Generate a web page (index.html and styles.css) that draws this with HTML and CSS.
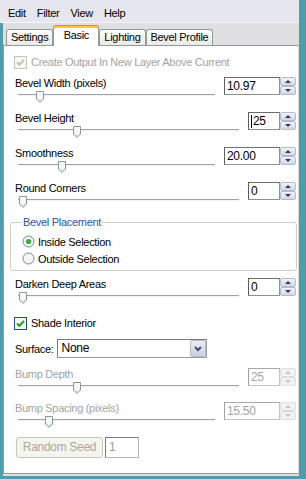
FILE: index.html
```html
<!DOCTYPE html>
<html lang="en">
<head>
    <meta charset="UTF-8">
    <title>Bevel</title>
    <link rel="stylesheet" href="styles.css">
</head>
<body>

<div class="window">
    <div class="menubar">
        <span class="menu">Edit</span>
        <span class="menu">Filter</span>
        <span class="menu">View</span>
        <span class="menu">Help</span>
    </div>

    <div class="dialog">
        <div class="tabs">
            <div class="tab">Settings</div>
            <div class="tab active">Basic</div>
            <div class="tab">Lighting</div>
            <div class="tab">Bevel Profile</div>
        </div>

        <div class="panel">
            <div class="check-row disabled">
                <svg class="box" width="13" height="13" viewBox="0 0 13 13"><rect x="0.5" y="0.5" width="12" height="12" fill="#f7f7f3" stroke="#c6c5b8"/><path d="M3 6.5L5.3 8.8L10 4" fill="none" stroke="#c6c5b8" stroke-width="2"/></svg>
                <span>Create Output In New Layer Above Current</span>
            </div>

            <div class="row">
                <div class="slide">
                    <div class="label">Bevel Width (pixels)</div>
                    <div class="track"><svg class="thumb" style="left:18px" width="8" height="12" viewBox="0 0 8 12"><path d="M0.5 0.5H7.5V8L4 11.5L0.5 8Z" fill="#f6f6f2" stroke="#8a98a6"/><path d="M1.6 8.3L4 10.3L6.4 8.3" fill="none" stroke="#a9d3a9"/></svg></div>
                </div>
                <div class="spin">
                    <div class="field wide">10.97</div>
                    <div class="arrows"><span class="btn"><i class="up"></i></span><span class="btn"><i class="down"></i></span></div>
                </div>
            </div>

            <div class="row">
                <div class="slide">
                    <div class="label">Bevel Height</div>
                    <div class="track"><svg class="thumb" style="left:55px" width="8" height="12" viewBox="0 0 8 12"><path d="M0.5 0.5H7.5V8L4 11.5L0.5 8Z" fill="#f6f6f2" stroke="#8a98a6"/><path d="M1.6 8.3L4 10.3L6.4 8.3" fill="none" stroke="#a9d3a9"/></svg></div>
                </div>
                <div class="spin">
                    <div class="field"><span class="caret"></span>25</div>
                    <div class="arrows"><span class="btn"><i class="up"></i></span><span class="btn"><i class="down"></i></span></div>
                </div>
            </div>

            <div class="row">
                <div class="slide">
                    <div class="label">Smoothness</div>
                    <div class="track"><svg class="thumb" style="left:40px" width="8" height="12" viewBox="0 0 8 12"><path d="M0.5 0.5H7.5V8L4 11.5L0.5 8Z" fill="#f6f6f2" stroke="#8a98a6"/><path d="M1.6 8.3L4 10.3L6.4 8.3" fill="none" stroke="#a9d3a9"/></svg></div>
                </div>
                <div class="spin">
                    <div class="field wide">20.00</div>
                    <div class="arrows"><span class="btn"><i class="up"></i></span><span class="btn"><i class="down"></i></span></div>
                </div>
            </div>

            <div class="row">
                <div class="slide">
                    <div class="label">Round Corners</div>
                    <div class="track"><svg class="thumb" style="left:1px" width="8" height="12" viewBox="0 0 8 12"><path d="M0.5 0.5H7.5V8L4 11.5L0.5 8Z" fill="#f6f6f2" stroke="#8a98a6"/><path d="M1.6 8.3L4 10.3L6.4 8.3" fill="none" stroke="#a9d3a9"/></svg></div>
                </div>
                <div class="spin">
                    <div class="field">0</div>
                    <div class="arrows"><span class="btn"><i class="up"></i></span><span class="btn"><i class="down"></i></span></div>
                </div>
            </div>

            <fieldset class="group">
                <legend>Bevel Placement</legend>
                <div class="radio-row first">
                    <svg width="13" height="13" viewBox="0 0 13 13"><circle cx="6.5" cy="6.5" r="5.5" fill="#f5f5f1" stroke="#7088a6"/><circle cx="6.5" cy="6.5" r="2.6" fill="#3daa3d"/></svg>
                    <span>Inside Selection</span>
                </div>
                <div class="radio-row">
                    <svg width="13" height="13" viewBox="0 0 13 13"><circle cx="6.5" cy="6.5" r="5.5" fill="#f5f5f1" stroke="#7088a6"/></svg>
                    <span>Outside Selection</span>
                </div>
            </fieldset>

            <div class="row after-group">
                <div class="slide">
                    <div class="label">Darken Deep Areas</div>
                    <div class="track"><svg class="thumb" style="left:1px" width="8" height="12" viewBox="0 0 8 12"><path d="M0.5 0.5H7.5V8L4 11.5L0.5 8Z" fill="#f6f6f2" stroke="#8a98a6"/><path d="M1.6 8.3L4 10.3L6.4 8.3" fill="none" stroke="#a9d3a9"/></svg></div>
                </div>
                <div class="spin">
                    <div class="field">0</div>
                    <div class="arrows"><span class="btn"><i class="up"></i></span><span class="btn"><i class="down"></i></span></div>
                </div>
            </div>

            <div class="check-row shade">
                <svg class="box" width="13" height="13" viewBox="0 0 13 13"><rect x="0.5" y="0.5" width="12" height="12" fill="#f5f5f1" stroke="#1c5180"/><path d="M3 6.5L5.3 8.8L10 4" fill="none" stroke="#21a121" stroke-width="2"/></svg>
                <span>Shade Interior</span>
            </div>

            <div class="surface-row">
                <span>Surface:</span>
                <div class="select">
                    <span class="value">None</span>
                    <span class="drop"><svg width="8" height="6" viewBox="0 0 8 6"><path d="M1 1L4 4L7 1" fill="none" stroke="#3c4e6e" stroke-width="2"/></svg></span>
                </div>
            </div>

            <div class="row bump disabled">
                <div class="slide">
                    <div class="label">Bump Depth</div>
                    <div class="track"><svg class="thumb" style="left:55px" width="8" height="12" viewBox="0 0 8 12"><path d="M0.5 0.5H7.5V8L4 11.5L0.5 8Z" fill="#f6f6f2" stroke="#8a98a6"/><path d="M1.6 8.3L4 10.3L6.4 8.3" fill="none" stroke="#a9d3a9"/></svg></div>
                </div>
                <div class="spin">
                    <div class="field">25</div>
                    <div class="arrows"><span class="btn"><i class="up"></i></span><span class="btn"><i class="down"></i></span></div>
                </div>
            </div>

            <div class="row bump disabled">
                <div class="slide">
                    <div class="label">Bump Spacing (pixels)</div>
                    <div class="track"><svg class="thumb" style="left:27px" width="8" height="12" viewBox="0 0 8 12"><path d="M0.5 0.5H7.5V8L4 11.5L0.5 8Z" fill="#f6f6f2" stroke="#8a98a6"/><path d="M1.6 8.3L4 10.3L6.4 8.3" fill="none" stroke="#a9d3a9"/></svg></div>
                </div>
                <div class="spin">
                    <div class="field wide">15.50</div>
                    <div class="arrows"><span class="btn"><i class="up"></i></span><span class="btn"><i class="down"></i></span></div>
                </div>
            </div>

            <div class="seed-row">
                <div class="seed-btn">Random Seed</div>
                <div class="seed-input">1</div>
            </div>
        </div>
    </div>
</div>

</body>
</html>
```

FILE: styles.css
```css
body {
    margin: 0;
    background-color: #4f9dac;
    font-family: "Liberation Sans", Arial, sans-serif;
    font-size: 11px;
    letter-spacing: -0.3px;
    color: #000;
}
.window {
    width: 306px;
    height: 479px;
    box-sizing: border-box;
    padding: 0 7px 3px 3px;
    display: flex;
    flex-direction: column;
}
.menubar {
    margin-left: -3px;
    height: 23px;
    box-sizing: border-box;
    padding: 4px 0 0 3px;
    background-color: #e6e6ef;
    border-bottom: 1px solid #f4f4f8;
    display: flex;
    gap: 1px;
    line-height: 18px;
}
.menu {
    padding: 0 5px;
}
.dialog {
    flex: 1;
    display: flex;
    flex-direction: column;
    background-color: #dfdfe2;
    padding-bottom: 2px;
}
.tabs {
    height: 22px;
    display: flex;
    align-items: flex-end;
    padding-left: 3px;
}
.tab {
    height: 16px;
    box-sizing: border-box;
    padding: 0 4px;
    border: 1px solid #919b9c;
    border-bottom: none;
    border-radius: 3px 3px 0 0;
    background: linear-gradient(#fefefe, #ebeae5);
    line-height: 15px;
    text-align: center;
}
.tab.active {
    position: relative;
    height: 21px;
    min-width: 46px;
    margin-bottom: -1px;
    background: #fff;
    border-top-color: #e68b2c;
    box-shadow: inset 0 2px #ffc83c;
    line-height: 19px;
}
.panel {
    flex: 1;
    background-color: #fff;
    border: 1px solid #919b9c;
    border-right-color: #d8d8d8;
    padding: 9px 2px 0 11px;
}
.check-row {
    height: 14px;
    display: flex;
    align-items: center;
    gap: 4px;
    margin-left: -1px;
}
.check-row.disabled {
    color: #a3a3a3;
    margin-bottom: 7px;
}
.check-row.shade {
    margin-top: 4px;
}
.row {
    height: 35px;
    display: grid;
    grid-template-columns: 1fr auto;
    column-gap: 9px;
}
.row.after-group {
    margin-top: 6px;
}
.row.bump {
    height: 34px;
    margin-top: 9px;
}
.row.bump + .row.bump {
    margin-top: 0;
}
.label {
    height: 14px;
    line-height: 14px;
    white-space: nowrap;
}
.track {
    position: relative;
    margin: 4px 0 0 3px;
    height: 0;
    border-top: 1px solid #a2a2a2;
    border-bottom: 1px solid #f2f2f2;
}
.thumb {
    position: absolute;
    top: -4px;
}
.spin {
    margin-top: 1px;
    height: 18px;
    display: flex;
}
.field {
    width: 32px;
    height: 18px;
    box-sizing: border-box;
    border: 1px solid #8f8f8f;
    border-top-color: #6c6c6c;
    border-left-color: #5f5f5f;
    padding-left: 2px;
    line-height: 16px;
    font-size: 12px;
    display: flex;
    align-items: center;
}
.field.wide {
    width: 56px;
}
.caret {
    width: 1px;
    height: 13px;
    background: #000;
    margin-right: 1px;
}
.arrows {
    width: 16px;
    display: flex;
    flex-direction: column;
}
.btn {
    height: 9px;
    box-sizing: border-box;
    border: 1px solid #b4bccb;
    border-radius: 2px;
    background: linear-gradient(#f1f3f8, #d3d8e3);
    display: flex;
    align-items: center;
    justify-content: center;
}
.up, .down {
    width: 0;
    height: 0;
    border-left: 3px solid transparent;
    border-right: 3px solid transparent;
}
.up {
    border-bottom: 3px solid #2c3a55;
}
.down {
    border-top: 3px solid #2c3a55;
}
.disabled .label,
.disabled .field {
    color: #a3a3a3;
}
.disabled .field {
    border-color: #c4c4c4;
    border-top-color: #a8a8a8;
    border-left-color: #a0a0a0;
}
.disabled .btn {
    border-color: #dedede;
    background: #f2f2f2;
}
.disabled .up {
    border-bottom-color: #c6c6c6;
}
.disabled .down {
    border-top-color: #c6c6c6;
}
.group {
    margin: -1px -1px 0 -5px;
    padding: 0 0 3px 11px;
    border: 1px solid #d0d0bf;
    border-radius: 3px;
}
.group legend {
    padding: 0 1px;
    line-height: 14px;
    color: #1f55a8;
}
.radio-row {
    height: 17px;
    display: flex;
    align-items: center;
    gap: 3px;
}
.radio-row.first {
    margin-top: 4px;
}
.surface-row {
    margin-top: 9px;
    height: 19px;
    display: flex;
    align-items: center;
    gap: 3px;
}
.select {
    width: 150px;
    height: 19px;
    box-sizing: border-box;
    border: 1px solid #9a9a9a;
    border-top-color: #7a7a7a;
    border-left-color: #7a7a7a;
    display: flex;
}
.select .value {
    flex: 1;
    padding-left: 4px;
    line-height: 17px;
    font-size: 12px;
}
.select .drop {
    width: 16px;
    border: 1px solid #b4bccb;
    border-radius: 2px;
    box-sizing: border-box;
    background: linear-gradient(#eceff5, #c9cfdc);
    display: flex;
    align-items: center;
    justify-content: center;
}
.seed-row {
    margin-top: 2px;
    height: 21px;
    display: flex;
    gap: 2px;
}
.seed-btn {
    margin-left: 1px;
    width: 87px;
    box-sizing: border-box;
    border: 1px solid #c9c7ba;
    border-radius: 3px;
    background-color: #f5f4ee;
    color: #aca899;
    text-align: center;
    line-height: 19px;
    font-size: 12px;
}
.seed-input {
    width: 34px;
    box-sizing: border-box;
    border: 1px solid #b5b5b5;
    border-top-color: #7a7a7a;
    border-left-color: #7a7a7a;
    padding-left: 3px;
    line-height: 19px;
    font-size: 12px;
    color: #9a9a9a;
}
```
